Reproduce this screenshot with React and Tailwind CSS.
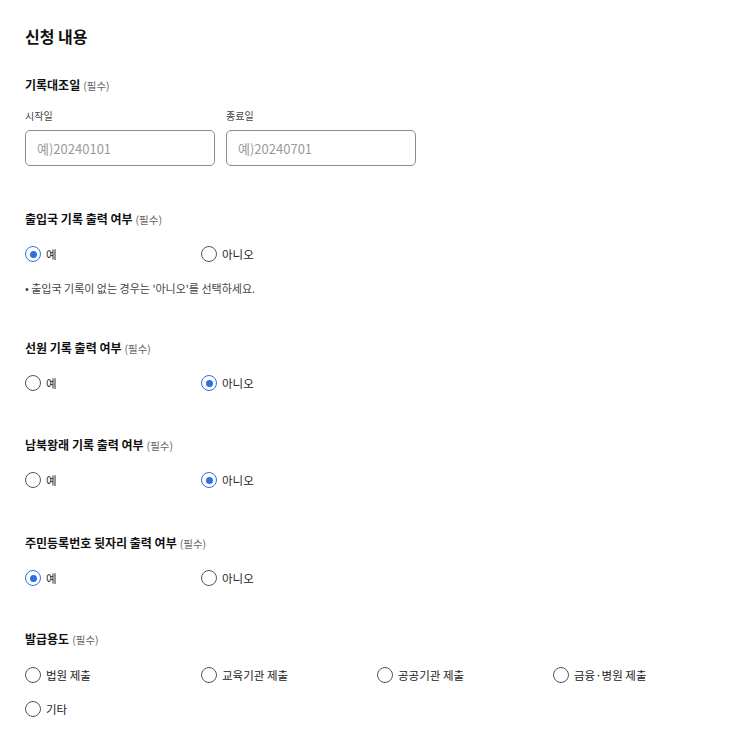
import { useState } from "react";

const FONT = "font-['Noto_Sans_CJK_KR','Noto_Sans',sans-serif]";

function Radio({ checked, label, onClick, width = "w-[176px]" }) {
  return (
    <button type="button" onClick={onClick} className={`flex h-[20px] ${width} items-center gap-[5px] text-left`}>
      <span
        className={`flex h-[16px] w-[16px] shrink-0 items-center justify-center rounded-full border-[1.5px] ${
          checked ? "border-[#2f6fe4]" : "border-[#555]"
        }`}
      >
        {checked && <span className="h-[7px] w-[7px] rounded-full bg-[#2f6fe4]" />}
      </span>
      <span className="text-[11.5px] leading-[20px] text-[#222]">{label}</span>
    </button>
  );
}

function Label({ children, className = "" }) {
  return (
    <div className={`flex h-[16px] items-baseline gap-[3px] overflow-visible ${className}`}>
      <span className="text-[12px] font-bold leading-[16px] text-[#111]">{children}</span>
      <span className="text-[10.5px] leading-[16px] text-[#666]">(필수)</span>
    </div>
  );
}

function YesNo({ value, onChange }) {
  return (
    <div className="mt-[17px] flex h-[20px]">
      <Radio checked={value === "y"} label="예" onClick={() => onChange("y")} />
      <Radio checked={value === "n"} label="아니오" onClick={() => onChange("n")} />
    </div>
  );
}

export default function App() {
  const [immig, setImmig] = useState("y");
  const [seaman, setSeaman] = useState("n");
  const [nk, setNk] = useState("n");
  const [rrn, setRrn] = useState("y");
  const [purpose, setPurpose] = useState(null);

  const purposes = ["법원 제출", "교육기관 제출", "공공기관 제출", "금융·병원 제출", "기타"];

  return (
    <div className={`min-h-[743px] bg-white px-[25px] pt-[26px] ${FONT}`}>
      <h2 className="h-[20px] text-[16px] font-bold leading-[20px] text-[#111]">신청 내용</h2>

      <Label className="mt-[31px]">기록대조일</Label>
      <div className="mt-[17px] flex gap-[11px]">
        <div className="w-[190px]">
          <p className="h-[12px] text-[10px] leading-[12px] text-[#444]">시작일</p>
          <input
            placeholder="예)20240101"
            className="mt-[8px] h-[36px] w-full rounded-[5px] border border-[#8c8c8c] px-[11px] text-[13px] text-[#222] outline-none placeholder:text-[#9a9a9a]"
          />
        </div>
        <div className="w-[190px]">
          <p className="h-[12px] text-[10px] leading-[12px] text-[#444]">종료일</p>
          <input
            placeholder="예)20240701"
            className="mt-[8px] h-[36px] w-full rounded-[5px] border border-[#8c8c8c] px-[11px] text-[13px] text-[#222] outline-none placeholder:text-[#9a9a9a]"
          />
        </div>
      </div>

      <Label className="mt-[45px]">출입국 기록 출력 여부</Label>
      <YesNo value={immig} onChange={setImmig} />
      <p className="mt-[17px] h-[14px] text-[11px] leading-[14px] text-[#444]">• 출입국 기록이 없는 경우는 '아니오'를 선택하세요.</p>

      <Label className="mt-[45px]">선원 기록 출력 여부</Label>
      <YesNo value={seaman} onChange={setSeaman} />

      <Label className="mt-[44px]">남북왕래 기록 출력 여부</Label>
      <YesNo value={nk} onChange={setNk} />

      <Label className="mt-[45px]">주민등록번호 뒷자리 출력 여부</Label>
      <YesNo value={rrn} onChange={setRrn} />

      <Label className="mt-[43px]">발급용도</Label>
      <div className="mt-[18px] flex flex-wrap gap-y-[14px]">
        {purposes.map((p) => (
          <Radio key={p} checked={purpose === p} label={p} onClick={() => setPurpose(p)} />
        ))}
      </div>
    </div>
  );
}
